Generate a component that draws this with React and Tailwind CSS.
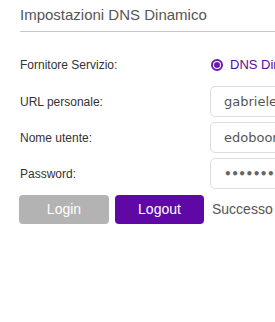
import React from "react";

export default function App() {
  return (
    <div className="w-[275px] h-[322px] overflow-hidden bg-white" style={{ fontFamily: '"Liberation Sans", Arial, sans-serif' }}>
      <div className="pl-5 pt-[6px]">
        <div className="text-[15px] leading-[18px] text-[#555] pb-[7px] border-b border-[#c8c8c8] w-[300px]">
          Impostazioni DNS Dinamico
        </div>
        <div className="mt-[25px] grid grid-cols-[190px_200px] items-center">
          <div className="text-[12px] text-[#333] h-[16px] leading-[16px]">Fornitore Servizio:</div>
          <div className="flex items-center h-[16px] pl-[1px]">
            <span className="w-[12px] h-[12px] rounded-full border-2 border-[#6a1bb0] flex items-center justify-center">
              <span className="w-[6px] h-[6px] rounded-full bg-[#6a1bb0]"></span>
            </span>
            <span className="ml-[7px] text-[13px] text-[#5b0ba3] whitespace-nowrap">DNS Dinamico</span>
          </div>
        </div>
        <div className="mt-[13px] flex flex-col gap-[5px]">
          {[
            ["URL personale:", "gabriele.ddns.net", false],
            ["Nome utente:", "edoboom", false],
            ["Password:", "•••••••••", true],
          ].map(([l, v, pw]) => (
            <div key={l} className="grid grid-cols-[190px_200px] items-center">
              <div className="text-[12px] text-[#333]">{l}</div>
              <div className="h-[31px] border border-[#ddd] rounded-[5px] flex items-center pl-[13px] whitespace-nowrap overflow-hidden" style={{ fontFamily: '"DejaVu Sans", Verdana, sans-serif' }}>
                <span className={pw ? "text-[12px] text-[#666] tracking-[-0.5px] font-bold" : "text-[13px] text-[#555]"}>{v}</span>
              </div>
            </div>
          ))}
        </div>
        <div className="mt-[6px] flex items-center">
          <div className="ml-[-1px] w-[90px] h-[29px] rounded-[4px] bg-[#b3b3b3] text-white text-[14px] flex items-center justify-center">Login</div>
          <div className="ml-[6px] w-[89px] h-[29px] rounded-[4px] bg-[#5f08a6] text-white text-[14px] flex items-center justify-center">Logout</div>
          <div className="ml-[8px] text-[14px] text-[#555] whitespace-nowrap">Successo</div>
        </div>
      </div>
    </div>
  );
}
